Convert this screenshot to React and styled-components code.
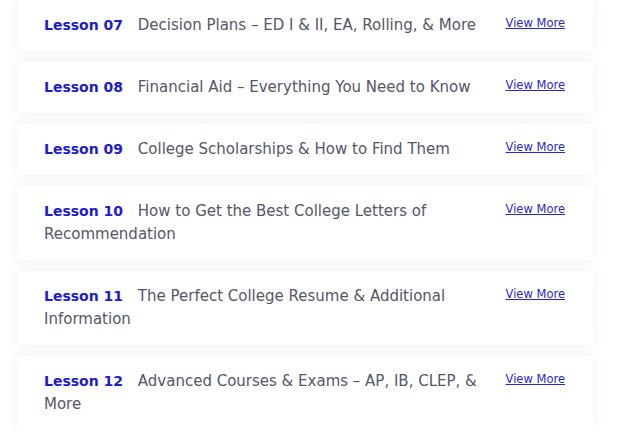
import React from "react";
import styled, { createGlobalStyle } from "styled-components";

const Global = createGlobalStyle`
  html, body { margin: 0; padding: 0; background: #ffffff; }
  body { font-family: "DejaVu Sans", "Noto Sans", sans-serif; }
`;

const List = styled.div`
  display: flex;
  flex-direction: column;
  gap: 11px;
  width: 576px;
  margin-left: 17px;
`;

const Card = styled.div`
  display: flex;
  align-items: flex-start;
  gap: 20px;
  padding: 14px 28px 14px 27px;
  background: #ffffff;
  border-radius: 3px;
  box-shadow: 0 0 12px rgba(0, 0, 0, 0.07);
`;

const Text = styled.div`
  flex: 1;
  font-size: 15px;
  line-height: 23px;
  color: #56566a;
`;

const Label = styled.span`
  font-size: 14px;
  font-weight: 700;
  color: #1c1cd0;
  margin-right: 10px;
`;

const Link = styled.a`
  flex: none;
  font-size: 11.5px;
  line-height: 18px;
  color: #2828c8;
  text-decoration: underline;
  cursor: pointer;
`;

const lessons = [
  ["07", "Decision Plans – ED I & II, EA, Rolling, & More"],
  ["08", "Financial Aid – Everything You Need to Know"],
  ["09", "College Scholarships & How to Find Them"],
  ["10", "How to Get the Best College Letters of Recommendation"],
  ["11", "The Perfect College Resume & Additional Information"],
  ["12", "Advanced Courses & Exams – AP, IB, CLEP, & More"],
];

export default function App() {
  return (
    <>
      <Global />
      <List>
        {lessons.map(([n, t]) => (
          <Card key={n}>
            <Text>
              <Label>Lesson {n}</Label> {t}
            </Text>
            <Link>View More</Link>
          </Card>
        ))}
      </List>
    </>
  );
}
